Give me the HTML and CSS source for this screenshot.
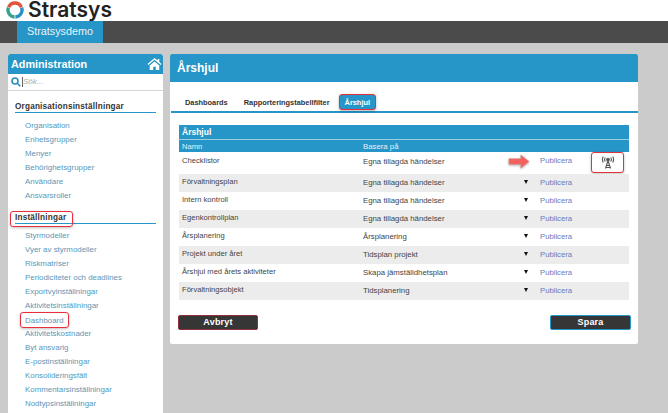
FILE: index.html
```html
<!DOCTYPE html>
<html lang="sv">
<head>
<meta charset="utf-8">
<title>Årshjul</title>
<link rel="stylesheet" href="styles.css">
</head>
<body>
<header class="brand">
  <svg class="logo" width="18" height="18" viewBox="0 0 18 18" fill="none" stroke-width="3.4">
    <path d="M2.6 6.2A7 7 0 0 1 15.4 6.2" stroke="#e2533f"/>
    <path d="M2.4 6.6A7 7 0 0 0 8.6 16" stroke="#35a28c"/>
    <path d="M15.6 6.6A7 7 0 0 1 9.4 16" stroke="#2b8fc4"/>
  </svg>
  <span class="brand-name">Stratsys</span>
</header>
<nav class="topbar"><a class="toptab">Stratsysdemo</a></nav>
<div class="page">
  <aside class="side">
    <div class="side-head">
      <span>Administration</span>
      <svg width="15" height="12" viewBox="0 0 14 12" fill="#fff"><path d="M7 0 0 6l.8 1L7 1.800 13.200 7l.8-1-2.200-1.900V1h-1.700v1.600z"/><path d="M2.200 7.400 7 3.400l4.800 4V12H8.300V8.700H5.700V12H2.200z"/></svg>
    </div>
    <div class="search">
      <svg width="10" height="10" viewBox="0 0 10 10" fill="none" stroke="#2a8fc0" stroke-width="1.600"><circle cx="4" cy="4" r="3"/><path d="M6.200 6.200 9.300 9.300"/></svg>
      <span class="search-text">Sök...</span>
    </div>
    <h2 class="group first"><span>Organisationsinställningar</span></h2>
    <ul class="links">
      <li>Organisation</li><li>Enhetsgrupper</li><li>Menyer</li><li>Behörighetsgrupper</li><li>Användare</li><li>Ansvarsroller</li>
    </ul>
    <h2 class="group second"><span class="mark-group">Inställningar</span></h2>
    <ul class="links links-second">
      <li>Styrmodeller</li><li>Vyer av styrmodeller</li><li>Riskmatriser</li><li>Periodiciteter och deadlines</li><li>Exportvyinställningar</li><li>Aktivitetsinställningar</li><li><span class="mark-link">Dashboard</span></li><li>Aktivitetskostnader</li><li>Byt ansvarig</li><li>E-postinställningar</li><li>Konsolideringsfält</li><li>Kommentarsinställningar</li><li>Nodtypsinställningar</li>
    </ul>
  </aside>
  <main class="main">
    <h1 class="main-head">Årshjul</h1>
    <div class="tabs"><span class="tab">Dashboards</span><span class="tab">Rapporteringstabellfilter</span><span class="tab active">Årshjul</span></div>
    <section class="panel">
      <div class="panel-title">Årshjul</div>
      <div class="row head"><span>Namn</span><span>Basera på</span></div>
      <div class="row first-row"><span>Checklistor</span><span>Egna tillagda händelser</span>
        <svg class="arrow" width="22" height="15" viewBox="0 0 24 16" preserveAspectRatio="none"><path d="M1 5h13V1l9 7-9 7v-4H1z" fill="#f4625f" stroke="#d98a88" stroke-width=".6"/></svg>
        <a>Publicera</a>
        <span class="signal"><svg width="14" height="13" viewBox="0 0 14 13" fill="none" stroke="#555" stroke-width="1.100"><path d="M7 4.500 4.500 12.500M7 4.500 9.500 12.500M5.300 9.500h3.400M4.800 11.500h4.400"/><circle cx="7" cy="3.500" r="1.300" fill="#555"/><path d="M4.300 1.500a3.500 3.500 0 0 0 0 4M9.700 1.500a3.500 3.500 0 0 1 0 4M2.300.5a6 6 0 0 0 0 6M11.700.5a6 6 0 0 1 0 6"/></svg></span>
      </div>
      <div class="row alt"><span>Förvaltningsplan</span><span>Egna tillagda händelser</span><i class="caret"></i><a>Publicera</a></div>
      <div class="row"><span>Intern kontroll</span><span>Egna tillagda händelser</span><i class="caret"></i><a>Publicera</a></div>
      <div class="row alt"><span>Egenkontrollplan</span><span>Egna tillagda händelser</span><i class="caret"></i><a>Publicera</a></div>
      <div class="row"><span>Årsplanering</span><span>Årsplanering</span><i class="caret"></i><a>Publicera</a></div>
      <div class="row alt"><span>Projekt under året</span><span>Tidsplan projekt</span><i class="caret"></i><a>Publicera</a></div>
      <div class="row"><span>Årshjul med årets aktiviteter</span><span>Skapa jämställdhetsplan</span><i class="caret"></i><a>Publicera</a></div>
      <div class="row alt"><span>Förvaltningsobjekt</span><span>Tidsplanering</span><i class="caret"></i><a>Publicera</a></div>
    </section>
    <div class="actions"><button class="btn cancel">Avbryt</button><button class="btn save">Spara</button></div>
  </main>
</div>
</body>
</html>
```
FILE: styles.css
```css
* { box-sizing: border-box; }
html, body { margin: 0; height: 413px; overflow: hidden; }
body { background: #cbcbcb; font-family: "Liberation Sans", Arial, sans-serif; color: #444; }
.brand { height: 21px; background: #fff; display: flex; align-items: flex-start; padding: 1px 0 0 6px; }
.logo { flex: none; }
.brand-name { margin: -1px 0 0 4px; font: 600 21px/20px Inter, sans-serif; color: #222; }
.topbar { height: 22px; background: #4b4b4b; padding-left: 17px; }
.toptab { display: block; width: 86px; height: 22px; background: #2695c7; color: #e8f4fa; font-size: 10.800px; line-height: 21px; text-align: center; }
.page { display: flex; align-items: flex-start; gap: 7px; padding: 11px 30px 0 8px; }
.side { width: 155px; height: 359px; background: #fff; border-radius: 2px 2px 0 0; overflow: hidden; flex: none; }
.side-head { height: 20px; background: #2695c7; color: #fff; font-size: 10.800px; font-weight: 700; display: flex; align-items: center; justify-content: space-between; padding: 0 1px 0 3px; border-radius: 2px 2px 0 0; }
.search { height: 17px; border-bottom: 1px solid #d5d5d5; display: flex; align-items: center; padding-left: 3px; }
.search-text { border-left: 1px solid #666; font-size: 8px; font-style: italic; color: #aaa; line-height: 10px; margin-left: 1px; }
.group { margin: 0 7px; height: 13px; border-bottom: 1px solid #2695c7; font-size: 8.200px; font-weight: 700; line-height: 13px; color: #333; letter-spacing: .2px; }
.group.first { margin-top: 9px; }
.group.second { margin-top: 8px; }
.mark-group { display: inline-block; height: 16px; width: 63px; border: 1.500px solid #e8303c; border-radius: 3px; padding: 0 0 0 4px; margin-left: -5px; line-height: 11px; box-shadow: 0 1px 3px rgba(0,0,0,.25); }
.links { list-style: none; margin: 6px 0 0; padding: 0 0 0 17px; }
.links-second { margin-top: 5px; }
.links li { height: 14px; font-size: 7.900px; line-height: 14px; color: #5a97b8; }
.mark-link { display: inline-block; vertical-align: top; margin: -1px 0 0 -5px; padding: 0 4px; height: 16px; line-height: 15px; border: 1.500px solid #e8303c; border-radius: 3px; box-shadow: 0 1px 3px rgba(0,0,0,.25); color: #6a95ad; }
.main { width: 468px; height: 290px; background: #fff; border-radius: 2px; flex: none; }
.main-head { margin: 0; height: 28px; background: #2695c7; color: #fff; font-size: 12px; font-weight: 700; line-height: 28px; padding-left: 7px; border-radius: 2px 2px 0 0; }
.tabs { height: 31px; margin-left: 1px; border-bottom: 2px solid #2695c7; display: flex; align-items: flex-end; padding: 0 0 1px 6px; }
.tab { font-size: 7.400px; font-weight: 700; color: #333; height: 16px; line-height: 17px; padding: 0 8px; }
.tab.active { background: #2695c7; color: #fff; padding: 0 5px; border: 1px solid #e8303c; border-radius: 3px; line-height: 15px; margin-left: 1px; box-shadow: 0 1px 3px rgba(0,0,0,.3); }
.panel { margin: 12px 9px 0; }
.panel-title { height: 15px; background: #2695c7; border-bottom: 1px solid #9ccde3; color: #fff; font-size: 8.500px; font-weight: 700; line-height: 14px; padding-left: 3px; }
.row { display: flex; align-items: center; height: 18px; font-size: 7.800px; padding: 0 0 2px 3px; color: #444; position: relative; }
.row > span:first-child { width: 181px; flex: none; margin-top: -1px; font-size: 7.600px; }
.row > span:nth-child(2) { width: 141px; flex: none; }
.row a { color: #6b79b8; position: absolute; left: 361px; font-size: 7.700px; }
.row.alt { background: #ececec; }
.row.head { height: 12px; padding-bottom: 0; background: #2695c7; color: #e6f3f9; }
.row.head > span { margin-top: 0; }
.row.first-row { height: 22px; padding-bottom: 4px; }
.row.first-row a { top: 4px; }
.caret { position: absolute; left: 345px; top: 6px; width: 0; height: 0; border: 2.500px solid transparent; border-top: 4px solid #111; border-bottom: 0; }
.arrow { position: absolute; left: 329px; top: 2px; filter: drop-shadow(0 1px 1px rgba(0,0,0,.3)); }
.signal { position: absolute; left: 412px; top: 0; width: 33px; height: 21px; border: 1.500px solid #e8303c; border-radius: 3px; display: flex; align-items: center; justify-content: center; background: #fff; box-shadow: 0 1px 3px rgba(0,0,0,.25); }
.actions { display: flex; justify-content: space-between; margin: 15px 7px 0 8px; }
.btn { width: 81px; height: 15px; padding: 0; background: #363636; border: 1px solid #2695c7; border-radius: 2px; color: #fff; font: 700 9px/13px "Liberation Sans", Arial, sans-serif; letter-spacing: .2px; }
.btn.cancel { border-color: #8e2f3a; width: 80px; }
```
